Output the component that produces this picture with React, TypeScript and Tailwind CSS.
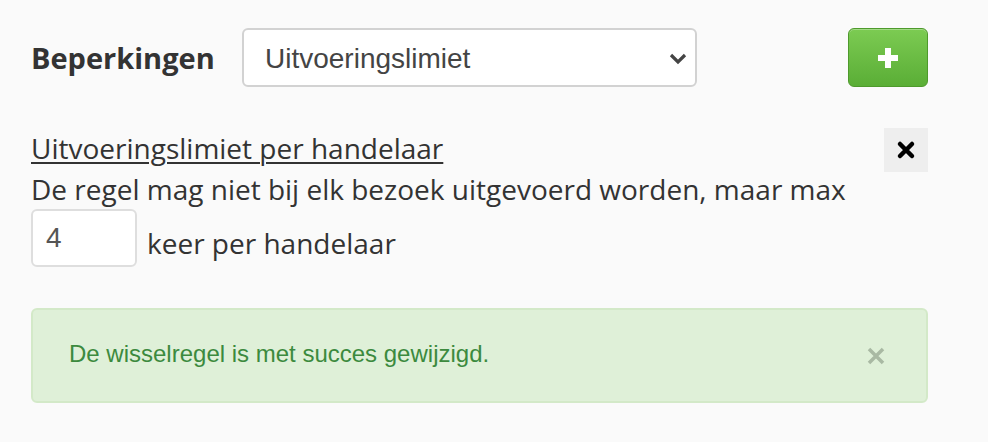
import React from "react";

export default function App() {
  return (
    <div className="w-[988px] h-[442px] bg-[#fafafa] pl-[31px] pt-[28px] text-[#333]" style={{ fontFamily: '"Open Sans", sans-serif' }}>
      <div className="w-[897px] flex items-center h-[59px]">
        <div className="w-[211px] text-[29px] font-bold text-[#333] leading-none">Beperkingen</div>
        <div className="relative w-[455px] h-[59px] rounded-[6px] border-2 border-[#d2d2d2] bg-white flex items-center pl-[21px] pt-[2px]">
          <span className="text-[28px] text-[#444]" style={{ fontFamily: '"Liberation Sans", Arial, sans-serif' }}>Uitvoeringslimiet</span>
          <svg className="absolute right-[8px] top-[22px]" width="18" height="13" viewBox="0 0 18 13">
            <path d="M2 3 L9 10 L16 3" fill="none" stroke="#444" strokeWidth="3.2" />
          </svg>
        </div>
        <div className="flex-1" />
        <button className="w-[80px] h-[59px] rounded-[6px] border border-[#4e9a2c] bg-gradient-to-b from-[#7ccb52] to-[#5aae36] flex items-center justify-center shadow-[inset_0_1px_0_rgba(255,255,255,0.3)]">
          <svg width="22" height="22" viewBox="0 0 22 22">
            <rect x="8" y="1" width="6" height="20" fill="white" />
            <rect x="1" y="8" width="20" height="6" fill="white" />
          </svg>
        </button>
      </div>

      <div className="w-[897px] mt-[41px] relative">
        <div className="absolute right-0 top-0 w-[44px] h-[44px] bg-[#eeeeee] flex items-center justify-center">
          <svg width="20" height="20" viewBox="0 0 20 20">
            <path d="M4 4 L16 16 M16 4 L4 16" stroke="black" strokeWidth="4.5" strokeLinecap="round" />
          </svg>
        </div>
        <div className="text-[28px] leading-[41px] underline decoration-[2px] underline-offset-[3px]">Uitvoeringslimiet per handelaar</div>
        <div className="text-[28px] leading-[41px]">De regel mag niet bij elk bezoek uitgevoerd worden, maar max</div>
        <div className="flex items-end -mt-[1px]">
          <div className="w-[106px] h-[58px] rounded-[6px] border-2 border-[#dedede] bg-white flex items-center pl-[13px] text-[28px] text-[#555]" style={{ fontFamily: '"Liberation Sans", Arial, sans-serif' }}>4</div>
          <div className="text-[28px] leading-[41px] ml-[10px] mb-[3px]">keer per handelaar</div>
        </div>
      </div>

      <div className="w-[897px] mt-[41px] h-[95px] rounded-[6px] border-2 border-[#d3e9c8] bg-[#dff0d8] flex items-center pl-[36px] pr-[40px]" style={{ fontFamily: '"Liberation Sans", Arial, sans-serif' }}>
        <span className="text-[24px] text-[#3c8a3e] flex-1 -mt-[3px]">De wisselregel is met succes gewijzigd.</span>
        <svg width="20" height="20" viewBox="0 0 20 20">
          <path d="M3 3 L17 17 M17 3 L3 17" stroke="#a9b9a3" strokeWidth="3.5" />
        </svg>
      </div>
    </div>
  );
}
